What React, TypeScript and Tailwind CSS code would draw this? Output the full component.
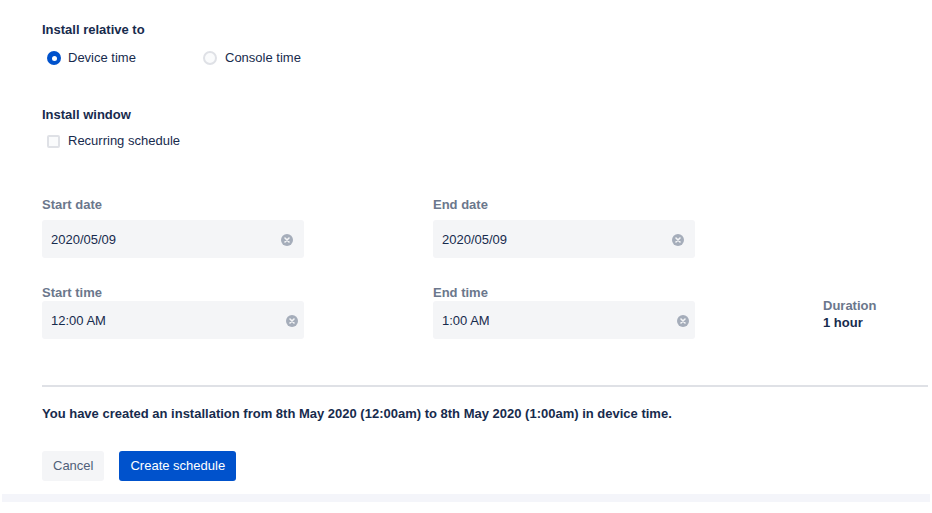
import { useState } from 'react';

function ClearIcon() {
  return (
    <svg width="12" height="12" viewBox="0 0 12 12">
      <circle cx="6" cy="6" r="6" fill="#a5adba" />
      <path d="M4 4l4 4M8 4l-4 4" stroke="#f4f5f7" strokeWidth="1.6" strokeLinecap="round" />
    </svg>
  );
}

function Field({ label, value, iconPad, gap }: { label: string; value: string; iconPad: string; gap: string }) {
  return (
    <div className="flex flex-col w-[262px]">
      <span className={`text-[13px] font-semibold text-[#6b778c] leading-4 ${gap}`}>{label}</span>
      <div className={`flex items-center justify-between h-[38px] rounded-[3px] bg-[#f4f5f7] pl-[9px] pt-[1px] ${iconPad}`}>
        <span className="text-[13px] text-[#172b4d]">{value}</span>
        <ClearIcon />
      </div>
    </div>
  );
}

export default function App() {
  const [relative, setRelative] = useState('device');
  const [recurring, setRecurring] = useState(false);

  return (
    <div
      className="w-[932px] h-[513px] bg-white text-[#172b4d] overflow-hidden"
      style={{ fontFamily: '"Liberation Sans", Arial, sans-serif' }}
    >
      <div className="pl-[42px] pr-[4px] pt-[22px]">
        <h3 className="text-[13px] font-semibold leading-4">Install relative to</h3>
        <div className="flex items-center mt-[12px] h-[16px]">
          <label className="flex items-center w-[161px] cursor-pointer" onClick={() => setRelative('device')}>
            <span className="ml-[5px] w-[14px] h-[14px] rounded-full flex items-center justify-center bg-[#0052cc]">
              {relative === 'device' && <span className="w-[5px] h-[5px] rounded-full bg-white" />}
            </span>
            <span className="ml-[7px] text-[13px]">Device time</span>
          </label>
          <label className="flex items-center cursor-pointer" onClick={() => setRelative('console')}>
            <span className="w-[14px] h-[14px] rounded-full border-2 border-[#dfe1e6] bg-[#fafbfc]" />
            <span className="ml-[8px] text-[13px]">Console time</span>
          </label>
        </div>

        <h3 className="text-[13px] font-semibold leading-4 mt-[41px]">Install window</h3>
        <label className="flex items-center mt-[10px] h-[16px] cursor-pointer" onClick={() => setRecurring(!recurring)}>
          <span className="ml-[5px] w-[13px] h-[13px] rounded-[2px] border-2 border-[#dfe1e6] bg-[#fafbfc]" />
          <span className="ml-[8px] text-[13px]">Recurring schedule</span>
        </label>

        <div className="flex gap-[129px] mt-[48px]">
          <Field label="Start date" value="2020/05/09" iconPad="pr-[11px]" gap="mb-[7px]" />
          <Field label="End date" value="2020/05/09" iconPad="pr-[11px]" gap="mb-[7px]" />
        </div>

        <div className="flex items-end mt-[27px]">
          <Field label="Start time" value="12:00 AM" iconPad="pr-[6px]" gap="mb-0" />
          <div className="ml-[129px]">
            <Field label="End time" value="1:00 AM" iconPad="pr-[6px]" gap="mb-0" />
          </div>
          <div className="ml-[128px] mb-[8px] flex flex-col">
            <span className="text-[13px] font-semibold text-[#6b778c] leading-4">Duration</span>
            <span className="text-[13px] font-bold leading-4 mt-[1px]">1 hour</span>
          </div>
        </div>

        <div className="mt-[46px] h-[2px] bg-[#dfe1e6]" />

        <p className="mt-[19px] text-[13px] font-bold leading-4">
          You have created an installation from 8th May 2020 (12:00am) to 8th May 2020 (1:00am) in device time.
        </p>

        <div className="flex gap-[15px] mt-[29px]">
          <button className="h-[30px] px-[11px] rounded-[3px] bg-[#f4f5f7] text-[13px] text-[#505f79]">Cancel</button>
          <button className="h-[30px] px-[11px] rounded-[3px] bg-[#0052cc] text-[13px] text-white">Create schedule</button>
        </div>
      </div>
      <div className="mt-[13px] mx-[2px] h-[8px] bg-[#f4f5fa]" />
    </div>
  );
}
